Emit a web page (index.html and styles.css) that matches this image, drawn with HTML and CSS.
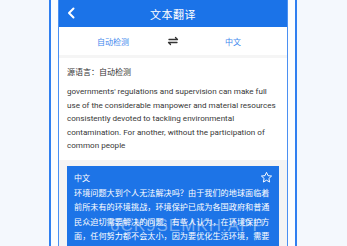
FILE: index.html
```html
<!DOCTYPE html>
<html lang="zh">
<head>
<meta charset="utf-8">
<title>文本翻译</title>
<link rel="stylesheet" href="styles.css">
</head>
<body>
<div class="phone">
  <div class="screen">
    <div class="header">
      <svg class="back" width="10" height="12" viewBox="0 0 10 12"><path d="M7.5 1.5 L3 6 L7.5 10.5" fill="none" stroke="#fff" stroke-width="2" stroke-linecap="round" stroke-linejoin="round"/></svg>
      <span class="title">文本翻译</span>
    </div>
    <div class="tabs">
      <span class="tab">自动检测</span>
      <svg class="swap" width="12" height="10" viewBox="0 0 12 10"><path d="M2 3.5 H10.5 M8.5 1.5 L10.5 3.5 M10 6.5 H1.5 M3.5 8.5 L1.5 6.5" fill="none" stroke="#333" stroke-width="1.3" stroke-linecap="round" stroke-linejoin="round"/></svg>
      <span class="tab">中文</span>
    </div>
    <div class="source">
      <div class="src-label">源语言：自动检测</div>
      <p class="src-text">governments' regulations and supervision can make full use of the considerable manpower and material resources consistently devoted to tackling environmental contamination. For another, without the participation of common people</p>
    </div>
    <div class="result-wrap">
      <div class="result">
        <div class="result-head">
          <span class="lang">中文</span>
          <svg class="star" width="13" height="13" viewBox="0 0 24 24"><path d="M12 2.5 L14.8 8.6 L21.4 9.3 L16.4 13.8 L17.8 20.4 L12 17 L6.2 20.4 L7.6 13.8 L2.6 9.3 L9.2 8.6 Z" fill="none" stroke="#fff" stroke-width="1.8" stroke-linejoin="round"/></svg>
        </div>
        <p class="res-text">环境问题大到个人无法解决吗？由于我们的地球面临着前所未有的环境挑战，环境保护已成为各国政府和普通民众迫切需要解决的问题。有些人认为，在环境保护方面，任何努力都不会太小，因为要优化生活环境，需要</p>
        <div class="watermark">6CK9SEMKH.APP</div>
      </div>
    </div>
  </div>
</div>
</body>
</html>
```
FILE: styles.css
```css
* { box-sizing: border-box; }
html, body { margin: 0; padding: 0; }
body {
  background: #f4f8fd;
  font-family: Roboto, "Noto Sans CJK SC", sans-serif;
  width: 347px;
  height: 246px;
  overflow: hidden;
}
.phone {
  margin-left: 49px;
  width: 248px;
  height: 246px;
  border-left: 2px solid #2f7ff0;
  border-right: 2px solid #2f7ff0;
  background: #fbfdff;
  padding: 0 7px;
  overflow: hidden;
}
.screen {
  height: 100%;
  border-left: 1px solid #4b90f2;
  border-right: 1px solid #4b90f2;
  background: #fff;
  overflow: hidden;
}
.header {
  height: 27px;
  background: #1b73e8;
  display: flex;
  align-items: center;
  justify-content: center;
  position: relative;
}
.back { position: absolute; left: 7px; top: 7px; }
.title {
  color: #fff;
  font-size: 11px;
  letter-spacing: 0.5px;
}
.tabs {
  display: grid;
  grid-template-columns: 80px 40px 80px;
  justify-content: center;
  align-items: center;
  justify-items: center;
  border-bottom: 3px solid #f5f5f5;
  height: 31px;
}
.tab {
  color: #4088ee;
  font-size: 8px;
}
.source {
  padding: 8px 8px 7px 8px;
}
.src-label {
  font-size: 8px;
  color: #333;
  line-height: 14px;
  margin-bottom: 5px;
}
.src-text {
  margin: 0;
  font-size: 8.1px;
  line-height: 13.6px;
  color: #383838;
}
.result-wrap {
  background: #f4f4f4;
  padding: 6px 8px 0 8px;
  height: 100px;
}
.result {
  background: #1d74e7;
  padding: 5px 6px 6px 7px;
  position: relative;
  height: 100px;
}
.result-head {
  display: flex;
  justify-content: space-between;
  align-items: center;
  height: 14px;
}
.lang { color: #fff; font-size: 8px; }
.res-text {
  margin: 1px 0 0 0;
  color: #fff;
  font-size: 8.1px;
  line-height: 14.5px;
  letter-spacing: 0.05px;
}
.watermark {
  position: absolute;
  left: 43px;
  top: 51px;
  font-family: "Liberation Sans", sans-serif;
  font-size: 17px;
  line-height: 17px;
  color: rgba(255,255,255,0.42);
  letter-spacing: 1px;
}
```
